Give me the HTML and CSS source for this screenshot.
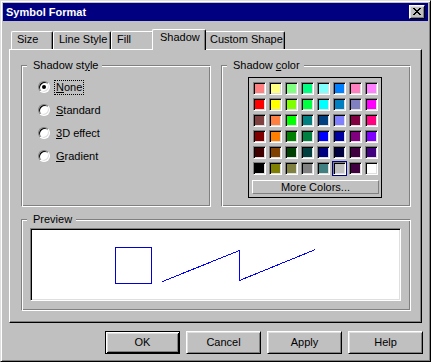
FILE: index.html
```html
<!DOCTYPE html>
<html>
<head>
<meta charset="utf-8">
<title>Symbol Format</title>
<link rel="stylesheet" href="styles.css">
</head>
<body>
<div class="window">
  <div class="titlebar">
    <span class="title">Symbol Format</span>
    <span class="close"><svg width="8" height="7" viewBox="0 0 8 7" shape-rendering="crispEdges"><path d="M0 0h2v1H0zM6 0h2v1H6zM1 1h2v1H1zM5 1h2v1H5zM2 2h4v1H2zM3 3h2v1H3zM2 4h4v1H2zM1 5h2v1H1zM5 5h2v1H5zM0 6h2v1H0zM6 6h2v1H6z" fill="#000"/></svg></span>
  </div>
  <div class="tabs">
    <div class="tab w-size">Size</div>
    <div class="tab w-line">Line Style</div>
    <div class="tab w-fill">Fill</div>
    <div class="tab active">Shadow</div>
    <div class="tab w-custom">Custom Shape</div>
  </div>
  <div class="panel">
    <div class="top-row">
      <div class="group">
        <div class="group-title">Shadow st<u>y</u>le</div>
        <div class="radios">
          <div class="radio-row"><span class="radio"><span class="dot"></span></span><span class="label focus"><u>N</u>one</span></div>
          <div class="radio-row"><span class="radio"></span><span class="label"><u>S</u>tandard</span></div>
          <div class="radio-row"><span class="radio"></span><span class="label"><u>3</u>D effect</span></div>
          <div class="radio-row"><span class="radio"></span><span class="label"><u>G</u>radient</span></div>
        </div>
      </div>
      <div class="group">
        <div class="group-title">Shadow <u>c</u>olor</div>
        <div class="palette">
          <div class="swatches">
            <span class="swatch" style="background-color:#ff8080"></span>
            <span class="swatch" style="background-color:#ffff80"></span>
            <span class="swatch" style="background-color:#80ff80"></span>
            <span class="swatch" style="background-color:#00ff80"></span>
            <span class="swatch" style="background-color:#80ffff"></span>
            <span class="swatch" style="background-color:#0080ff"></span>
            <span class="swatch" style="background-color:#ff80c0"></span>
            <span class="swatch" style="background-color:#ff80ff"></span>
            <span class="swatch" style="background-color:#ff0000"></span>
            <span class="swatch" style="background-color:#ffff00"></span>
            <span class="swatch" style="background-color:#80ff00"></span>
            <span class="swatch" style="background-color:#00ff40"></span>
            <span class="swatch" style="background-color:#00ffff"></span>
            <span class="swatch" style="background-color:#0080c0"></span>
            <span class="swatch" style="background-color:#8080c0"></span>
            <span class="swatch" style="background-color:#ff00ff"></span>
            <span class="swatch" style="background-color:#804040"></span>
            <span class="swatch" style="background-color:#ff8040"></span>
            <span class="swatch" style="background-color:#00ff00"></span>
            <span class="swatch" style="background-color:#008080"></span>
            <span class="swatch" style="background-color:#004080"></span>
            <span class="swatch" style="background-color:#8080ff"></span>
            <span class="swatch" style="background-color:#800040"></span>
            <span class="swatch" style="background-color:#ff0080"></span>
            <span class="swatch" style="background-color:#800000"></span>
            <span class="swatch" style="background-color:#ff8000"></span>
            <span class="swatch" style="background-color:#008000"></span>
            <span class="swatch" style="background-color:#008040"></span>
            <span class="swatch" style="background-color:#0000ff"></span>
            <span class="swatch" style="background-color:#0000a0"></span>
            <span class="swatch" style="background-color:#800080"></span>
            <span class="swatch" style="background-color:#8000ff"></span>
            <span class="swatch" style="background-color:#400000"></span>
            <span class="swatch" style="background-color:#804000"></span>
            <span class="swatch" style="background-color:#004000"></span>
            <span class="swatch" style="background-color:#004040"></span>
            <span class="swatch" style="background-color:#000080"></span>
            <span class="swatch" style="background-color:#000040"></span>
            <span class="swatch" style="background-color:#400040"></span>
            <span class="swatch" style="background-color:#400080"></span>
            <span class="swatch" style="background-color:#000000"></span>
            <span class="swatch" style="background-color:#808000"></span>
            <span class="swatch" style="background-color:#808040"></span>
            <span class="swatch" style="background-color:#808080"></span>
            <span class="swatch" style="background-color:#408080"></span>
            <span class="swatch sel" style="background-color:#c0c0c0"></span>
            <span class="swatch" style="background-color:#400040"></span>
            <span class="swatch" style="background-color:#ffffff"></span>
          </div>
          <div class="more">More Colors...</div>
        </div>
      </div>
    </div>
    <div class="group preview-group">
      <div class="group-title">Preview</div>
      <div class="preview">
        <svg width="367" height="69" viewBox="0 0 367 69" shape-rendering="crispEdges">
          <rect x="83.5" y="17.5" width="36" height="36" fill="none" stroke="#0000d0" stroke-width="1"/>
          <polyline points="130.5,51.5 207.5,20.5 207.5,50.5 283.5,19.5" fill="none" stroke="#0000ff" stroke-width="1"/>
        </svg>
      </div>
    </div>
  </div>
  <div class="buttons">
    <div class="btn default">OK</div>
    <div class="btn">Cancel</div>
    <div class="btn">Apply</div>
    <div class="btn">Help</div>
  </div>
</div>
</body>
</html>
```
FILE: styles.css
```css
* { box-sizing: border-box; }
html, body { margin: 0; padding: 0; }
body {
  width: 431px;
  height: 362px;
  overflow: hidden;
  background: #c0c0c0;
  font-family: "Liberation Sans", Arial, sans-serif;
  font-size: 11px;
  color: #000;
}
u { text-decoration: underline; text-underline-offset: 1px; }

.window {
  width: 431px;
  height: 362px;
  background: #c0c0c0;
  border: 1px solid;
  border-color: #dfdfdf #000 #000 #dfdfdf;
  box-shadow: inset 1px 1px #fff, inset -1px -1px #808080;
  padding: 2px;
  display: flex;
  flex-direction: column;
}

.titlebar {
  height: 18px;
  flex: none;
  background: #000080;
  color: #fff;
  font-weight: bold;
  display: flex;
  align-items: center;
  padding: 0 3px;
  line-height: 13px;
}
.close {
  margin-left: auto;
  width: 16px;
  height: 14px;
  background: #c0c0c0;
  border: 1px solid;
  border-color: #fff #000 #000 #fff;
  box-shadow: inset 1px 1px #dfdfdf, inset -1px -1px #808080;
  display: flex;
  justify-content: center;
  align-items: flex-start;
  padding-top: 2px;
}
.close svg { display: block; }

.tabs {
  display: flex;
  align-items: flex-end;
  height: 20px;
  flex: none;
  margin-top: 8px;
  padding-left: 8px;
}
.tab {
  height: 18px;
  border-top: 1px solid #fff;
  border-left: 1px solid #fff;
  border-right: 1px solid #000;
  box-shadow: inset -1px 0 #808080;
  border-radius: 2px 2px 0 0;
  padding: 1px 0 0 5px;
  line-height: 13px;
  white-space: nowrap;
  background: #c0c0c0;
}
.w-size { width: 42px; }
.w-line { width: 58px; }
.w-fill { width: 43px; }
.w-custom { width: 81px; }
.tab.active {
  width: 54px;
  height: 21px;
  margin: 0 -2px -1px;
  padding-left: 7px;
  position: relative;
  z-index: 1;
}

.panel {
  margin-left: 6px;
  width: 413px;
  height: 274px;
  flex: none;
  border: 1px solid;
  border-color: #fff #000 #000 #fff;
  box-shadow: inset -1px -1px #808080;
  padding: 15px 10px 11px 11px;
  display: flex;
  flex-direction: column;
  gap: 12px;
}
.top-row {
  height: 142px;
  display: flex;
  gap: 10px;
}
.top-row .group { flex: 1; }

.group {
  border: 1px solid;
  border-color: #808080 #fff #fff #808080;
  box-shadow: inset 1px 1px #fff, inset -1px -1px #808080;
  padding: 0 5px;
  display: flex;
  flex-direction: column;
  align-items: flex-start;
}
.group-title {
  margin-top: -7px;
  height: 13px;
  line-height: 13px;
  padding: 0 4px 0 6px;
  background: #c0c0c0;
  white-space: nowrap;
}

.radios {
  margin: 9px 0 0 11px;
  display: flex;
  flex-direction: column;
  gap: 10px;
}
.radio-row {
  display: flex;
  align-items: flex-start;
  height: 13px;
  line-height: 13px;
}
.radio {
  flex: none;
  width: 12px;
  height: 12px;
  border-radius: 50%;
  background: #fff;
  border: 1px solid;
  border-color: #808080 #fff #fff #808080;
  box-shadow: inset 1px 1px #000, inset -1px -1px #dfdfdf;
  margin-right: 5px;
  display: flex;
  align-items: center;
  justify-content: center;
}
.dot {
  width: 4px;
  height: 4px;
  border-radius: 50%;
  background: #000;
}
.label { padding: 0 1px; height: 13px; }
.focus { outline: 1px dotted #000; }

.palette {
  margin: 5px 0 0 21px;
  width: 134px;
  border: 1px solid #000;
  padding: 4px 3px 3px 4px;
}
.swatches {
  display: grid;
  grid-template-columns: repeat(8, 13px);
  grid-auto-rows: 13px;
  gap: 3px;
}
.swatch {
  display: block;
  border: 1px solid;
  border-color: #808080 #fff #fff #808080;
  box-shadow: inset 1px 1px #000, inset -1px -1px #dfdfdf;
}
.swatch.sel { outline: 1px solid #000080; }
.more {
  margin: 5px -1px 0;
  height: 14px;
  border: 1px solid;
  border-color: #fff #808080 #808080 #fff;
  text-align: center;
  line-height: 12px;
}

.preview-group { height: 92px; flex: none; }
.preview {
  margin: 2px 0 0 3px;
  width: 371px;
  height: 73px;
  background: #fff;
  border: 1px solid;
  border-color: #808080 #fff #fff #808080;
  box-shadow: inset 1px 1px #000, inset -1px -1px #dfdfdf;
}
.preview svg { display: block; margin: 1px; }

.buttons {
  display: flex;
  justify-content: flex-end;
  gap: 6px;
  margin-top: 8px;
  padding-right: 5px;
  flex: none;
}
.btn {
  width: 75px;
  height: 23px;
  border: 1px solid;
  border-color: #fff #000 #000 #fff;
  box-shadow: inset 1px 1px #dfdfdf, inset -1px -1px #808080;
  display: flex;
  align-items: center;
  justify-content: center;
  line-height: 13px;
}
.btn.default {
  border-color: #000;
  box-shadow: inset 1px 1px #fff, inset -1px -1px #000, inset 2px 2px #dfdfdf, inset -2px -2px #808080;
}
```
